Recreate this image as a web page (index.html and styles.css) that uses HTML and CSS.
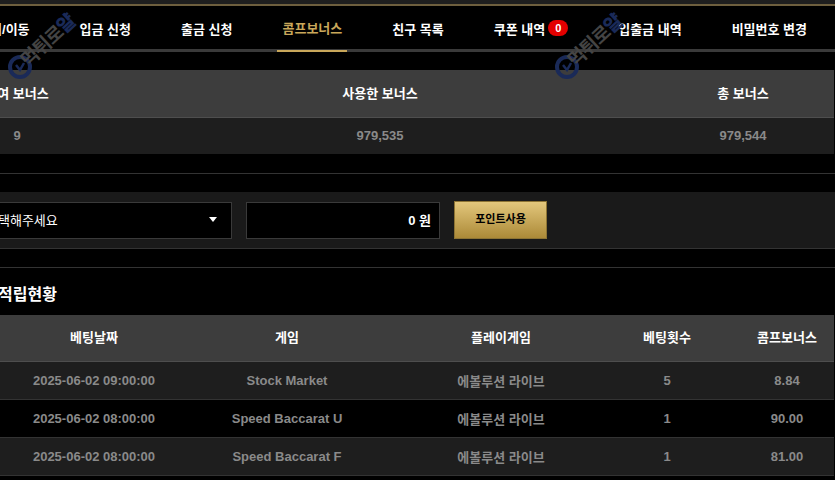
FILE: index.html
```html
<!DOCTYPE html>
<html lang="ko">
<head>
<meta charset="utf-8">
<title>콤프보너스</title>
<link rel="stylesheet" href="styles.css">
</head>
<body>
<div id="topbar"></div>
<ul id="nav">
    <li>머니/이동</li>
    <li>입금 신청</li>
    <li>출금 신청</li>
    <li class="selected">콤프보너스</li>
    <li>친구 목록</li>
    <li>쿠폰 내역 <span class="badge">0</span></li>
    <li>입출금 내역</li>
    <li>비밀번호 변경</li>
</ul>

<div id="container">
    <table class="summary">
        <tr>
            <th>잔여 보너스</th>
            <th>사용한 보너스</th>
            <th>총 보너스</th>
        </tr>
        <tr>
            <td>9</td>
            <td>979,535</td>
            <td>979,544</td>
        </tr>
    </table>

    <div class="rule first"></div>

    <div class="useform">
        <div class="select">
            <span>선택해주세요</span>
            <i class="arrow"></i>
        </div>
        <div class="amount">0 원</div>
        <div class="btn">포인트사용</div>
    </div>

    <div class="rule second"></div>

    <h3 class="title">적립현황</h3>

    <table class="history">
        <colgroup>
            <col class="c0"><col class="c1"><col class="c2"><col class="c3"><col class="c4"><col class="c5">
        </colgroup>
        <tr>
            <th></th>
            <th>베팅날짜</th>
            <th>게임</th>
            <th>플레이게임</th>
            <th>베팅횟수</th>
            <th>콤프보너스</th>
        </tr>
        <tr class="odd">
            <td></td>
            <td>2025-06-02 09:00:00</td>
            <td>Stock Market</td>
            <td>에볼루션 라이브</td>
            <td>5</td>
            <td>8.84</td>
        </tr>
        <tr>
            <td></td>
            <td>2025-06-02 08:00:00</td>
            <td>Speed Baccarat U</td>
            <td>에볼루션 라이브</td>
            <td>1</td>
            <td>90.00</td>
        </tr>
        <tr class="odd">
            <td></td>
            <td>2025-06-02 08:00:00</td>
            <td>Speed Baccarat F</td>
            <td>에볼루션 라이브</td>
            <td>1</td>
            <td>81.00</td>
        </tr>
    </table>
</div>

<div class="mark mark1">
    <svg width="26" height="26" viewBox="0 0 26 26">
        <circle cx="13" cy="13" r="10" fill="none" stroke="#1a2a58" stroke-width="4"/>
        <path d="M9 11l4 5 4-7" fill="none" stroke="#1a2a58" stroke-width="2.5"/>
    </svg>
    <div class="marktext">먹튀로<b>얄</b></div>
</div>
<div class="mark mark2">
    <svg width="26" height="26" viewBox="0 0 26 26">
        <circle cx="13" cy="13" r="10" fill="none" stroke="#1a2a58" stroke-width="4"/>
        <path d="M9 11l4 5 4-7" fill="none" stroke="#1a2a58" stroke-width="2.5"/>
    </svg>
    <div class="marktext">먹튀로<b>얄</b></div>
</div>
</body>
</html>
```

FILE: styles.css
```css
* {
    margin: 0;
    padding: 0;
    box-sizing: border-box;
}
li {
    list-style: none;
}
html, body {
    height: 480px;
    overflow: hidden;
    background-color: #000;
}
body {
    position: relative;
    font-family: "Liberation Sans", "Noto Sans CJK KR", sans-serif;
    font-size: 13px;
    font-weight: bold;
    color: #fff;
}

/* top */
#topbar {
    height: 6px;
    background-color: #1e1e1e;
    border-bottom: 2px solid #6e5f3e;
}
#nav {
    display: flex;
    justify-content: flex-end;
    gap: 40px;
    height: 46px;
    padding-right: 23px;
    border-bottom: 3px solid #3a3a3a;
}
#nav li {
    display: flex;
    align-items: center;
    gap: 3px;
    height: 46px;
    padding: 0 5px 2px;
    white-space: nowrap;
}
#nav .selected {
    color: #c9a75a;
    border-bottom: 2px solid #c9a75a;
}
.badge {
    width: 20px;
    height: 16px;
    border-radius: 8px;
    background-color: #e30000;
    font-size: 11px;
    line-height: 16px;
    text-align: center;
}

#container {
    width: 909px;
    margin-left: -74px;
    padding-top: 18px;
}

/* tables */
table {
    width: 908px;
    border-collapse: collapse;
    table-layout: fixed;
}
th {
    height: 47px;
    padding-bottom: 2px;
    background-color: #3d3d3d;
    border-bottom: 1px solid #4e4e4e;
    text-align: center;
}
td {
    height: 38px;
    text-align: center;
    white-space: nowrap;
    color: #8a8a8a;
    border-bottom: 1px solid #333;
}
.summary td {
    height: 37px;
    background-color: #1e1e1e;
    border-bottom: 0;
}
.summary th:nth-child(1), .summary th:nth-child(3) {
    width: 182px;
}
.history th {
    height: 46px;
}
.odd td {
    background-color: #1e1e1e;
}
.c0 { width: 96px; }
.c1 { width: 144px; }
.c2 { width: 242px; }
.c3 { width: 186px; }
.c4 { width: 146px; }
.c5 { width: 94px; }

.rule {
    height: 1px;
    background-color: #333;
}
.rule.first {
    margin-top: 19px;
}
.rule.second {
    margin-top: 18px;
}

/* form */
.useform {
    display: flex;
    align-items: center;
    gap: 14px;
    height: 57px;
    margin-top: 18px;
    padding-left: 55px;
    background-color: #1a1a1a;
    border-bottom: 1px solid #333;
}
.select {
    display: flex;
    align-items: center;
    justify-content: space-between;
    width: 251px;
    height: 37px;
    padding: 0 14px 2px 4px;
    background-color: #000;
    border: 1px solid #3a3a3a;
    font-weight: normal;
}
.arrow {
    width: 0;
    height: 0;
    border-left: 4px solid transparent;
    border-right: 4px solid transparent;
    border-top: 5px solid #fff;
}
.amount {
    width: 194px;
    height: 37px;
    padding-right: 8px;
    background-color: #000;
    border: 1px solid #3a3a3a;
    line-height: 35px;
    text-align: right;
}
.btn {
    width: 93px;
    height: 38px;
    background: linear-gradient(#e3c77c, #ac8a38);
    border: 1px solid #8d7434;
    color: #000;
    font-size: 11px;
    line-height: 35px;
    text-align: center;
}

.title {
    height: 47px;
    padding-left: 72px;
    font-size: 16px;
    line-height: 53px;
}

/* watermark */
.mark {
    position: absolute;
    top: 54px;
    width: 90px;
    height: 30px;
    pointer-events: none;
}
.mark1 {
    left: 7px;
}
.mark2 {
    left: 554px;
}
.marktext {
    position: absolute;
    left: 24px;
    top: -3px;
    width: 76px;
    color: #444;
    font-size: 19px;
    line-height: 20px;
    letter-spacing: -1px;
    white-space: nowrap;
    transform: rotate(-43deg);
    transform-origin: left bottom;
}
.marktext b {
    color: #1a2a58;
}
```
